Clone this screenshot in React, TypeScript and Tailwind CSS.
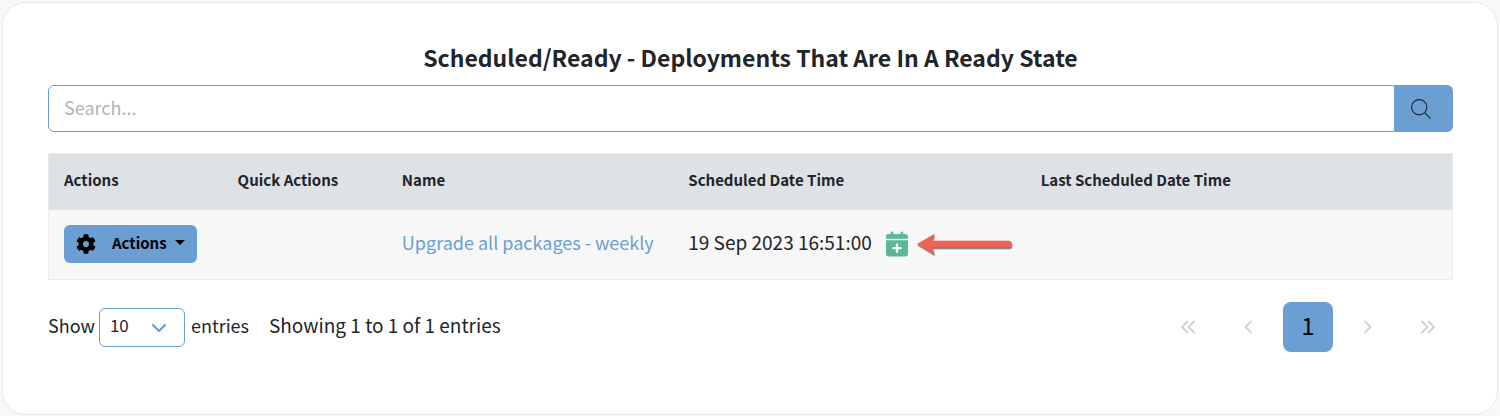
import { useState } from "react";
import { FaCog } from "react-icons/fa";

const columns = [
  { label: "Actions", width: "w-[12.4%]" },
  { label: "Quick Actions", width: "w-[11.7%]" },
  { label: "Name", width: "w-[20.4%]" },
  { label: "Scheduled Date Time", width: "w-[25.1%]" },
  { label: "Last Scheduled Date Time", width: "w-[30.4%]" },
];

function SearchIcon() {
  return (
    <svg width="20" height="20" viewBox="0 0 20 20" fill="none" stroke="#1c2b3a" strokeWidth="1.2" aria-hidden="true">
      <circle cx="8.2" cy="8.2" r="7.6" />
      <path d="M13.6 13.6 19.6 19.6" />
    </svg>
  );
}

function CalendarPlusIcon() {
  return (
    <svg width="22" height="26" viewBox="0 0 22 26" fill="currentColor" aria-hidden="true">
      <path d="M0 7.800V5.400A2.400 2.400 0 0 1 2.400 3H4.800V1.700a1.300 1.300 0 0 1 2.600 0V3h7.200V1.700a1.300 1.300 0 0 1 2.600 0V3h2.400A2.400 2.400 0 0 1 22 5.400V7.800Z" />
      <path d="M0 9.300H22V23a2.400 2.400 0 0 1-2.400 2.400H2.400A2.400 2.400 0 0 1 0 23Z" />
      <path d="M11 13.600v7.200M7.400 17.200h7.200" fill="none" stroke="#fff" strokeWidth="2.300" strokeLinecap="round" />
    </svg>
  );
}

function Chevron({ d, width }: { d: string; width: number }) {
  return (
    <svg
      width={width}
      height="14"
      viewBox={`0 0 ${width} 14`}
      fill="none"
      stroke="currentColor"
      strokeWidth="2"
      strokeLinecap="round"
      strokeLinejoin="round"
      aria-hidden="true"
    >
      <path d={d} />
    </svg>
  );
}

function PointerArrow() {
  return (
    <svg width="98" height="26" viewBox="0 0 98 26" className="shrink-0" aria-hidden="true">
      <defs>
        <filter id="arrow-shadow" x="-5%" y="-20%" width="110%" height="150%">
          <feDropShadow dx="0.6" dy="1.5" stdDeviation="0.6" floodColor="#333" floodOpacity="0.75" />
        </filter>
      </defs>
      <path
        filter="url(#arrow-shadow)"
        fill="#ee6352"
        d="M1 13 18.500 2.700 16.300 9.700H93a2.500 2.500 0 0 1 2.500 2.500v1.700a2.500 2.500 0 0 1-2.500 2.500H16.300L18.500 23.500Z"
      />
    </svg>
  );
}

export default function App() {
  const [query, setQuery] = useState("");
  const [size, setSize] = useState("10");

  return (
    <div className="bg-[#f7f8fa] p-0.5 font-['Noto_Sans_CJK_SC','Open_Sans',sans-serif] text-lg text-[#212529]">
      <main className="rounded-3xl border border-[#e6e8ec] bg-white pt-[34px] pr-11 pb-[62px] pl-[45px]">
        <h1 className="text-center text-[23px] leading-10 font-bold">
          Scheduled/Ready - Deployments That Are In A Ready State
        </h1>

        <form className="mt-2 flex h-[47px]" role="search" onSubmit={(e) => e.preventDefault()}>
          <input
            type="search"
            aria-label="Search"
            placeholder="Search..."
            value={query}
            onChange={(e) => setQuery(e.target.value)}
            className="min-w-0 flex-1 rounded-l-md border border-[#6b9fd4] px-[15px] pb-1 outline-none placeholder:text-[#adb5bd]"
          />
          <button
            type="submit"
            aria-label="Search"
            className="flex w-[58px] items-center rounded-r-md bg-[#6b9fd4] pl-4"
          >
            <SearchIcon />
          </button>
        </form>

        <table className="mt-[21px] w-full table-fixed border-collapse border border-[#e9ebee] text-left">
          <thead>
            <tr className="h-14 bg-[#dee2e6] text-[15px]">
              {columns.map((c) => (
                <th key={c.label} scope="col" className={`${c.width} px-[15px] pb-1 font-bold whitespace-nowrap`}>
                  {c.label}
                </th>
              ))}
            </tr>
          </thead>
          <tbody>
            <tr className="h-[70px] bg-[#f7f7f7] whitespace-nowrap">
              <td className="px-[15px]">
                <button
                  type="button"
                  aria-haspopup="menu"
                  className="flex h-[38px] items-center rounded-md bg-[#6b9fd4] px-3 text-[15px] font-bold text-black"
                >
                  <FaCog size={20} aria-hidden="true" />
                  <span className="ml-4 pb-1">Actions</span>
                  <svg width="10" height="9" viewBox="0 0 10 9" className="ml-2" aria-hidden="true">
                    <path d="M0 0h10L5 5Z" />
                  </svg>
                </button>
              </td>
              <td className="px-[15px]" />
              <td className="px-[15px] pb-1">
                <a href="#upgrade" className="text-[#6b9fd4]">
                  Upgrade all packages - weekly
                </a>
              </td>
              <td className="px-[15px]">
                <div className="flex items-center">
                  <span className="pb-1 text-[19px]">19 Sep 2023 16:51:00</span>
                  <button type="button" aria-label="Add to calendar" className="ml-3.5 text-[#5cb798]">
                    <CalendarPlusIcon />
                  </button>
                  <span className="ml-2 flex">
                    <PointerArrow />
                  </span>
                </div>
              </td>
              <td className="px-[15px]" />
            </tr>
          </tbody>
        </table>

        <div className="mt-[22px] flex items-center justify-between">
          <div className="flex items-center">
            <label htmlFor="page-size" className="pb-1">Show</label>
            <div className="relative mr-1.5 ml-1">
              <select
                id="page-size"
                value={size}
                onChange={(e) => setSize(e.target.value)}
                className="h-[39px] w-[86px] appearance-none rounded-md border border-[#6b9fd4] bg-white pb-1 pl-2.5 text-[17px]"
              >
                <option>10</option>
                <option>25</option>
                <option>50</option>
              </select>
              <span className="pointer-events-none absolute top-3 right-[18px] text-[#5b9be0]">
                <Chevron width={16} d="M2 5l6 6 6-6" />
              </span>
            </div>
            <span className="pb-1">entries</span>
            <span className="ml-5 pb-1 text-[19px]">Showing 1 to 1 of 1 entries</span>
          </div>

          <nav aria-label="Pagination" className="flex items-center gap-2.5 text-[#ced4da]">
            <button type="button" aria-label="First page" className="flex size-[50px] items-center justify-center">
              <Chevron width={16} d="M7.500 1.500 2 7l5.500 5.500M14 1.500 8.500 7l5.500 5.500" />
            </button>
            <button type="button" aria-label="Previous page" className="flex size-[50px] items-center justify-center">
              <Chevron width={8} d="M7 1.500 1.500 7 7 12.500" />
            </button>
            <button type="button" aria-current="page" className="size-[50px] rounded-lg bg-[#6b9fd4] pb-1 text-2xl text-black">
              1
            </button>
            <button type="button" aria-label="Next page" className="flex size-[50px] items-center justify-center">
              <Chevron width={8} d="M1 1.500 6.500 7 1 12.500" />
            </button>
            <button type="button" aria-label="Last page" className="flex size-[50px] items-center justify-center">
              <Chevron width={16} d="M2 1.500 7.500 7 2 12.500M8.500 1.500 14 7l-5.500 5.500" />
            </button>
          </nav>
        </div>
      </main>
    </div>
  );
}
